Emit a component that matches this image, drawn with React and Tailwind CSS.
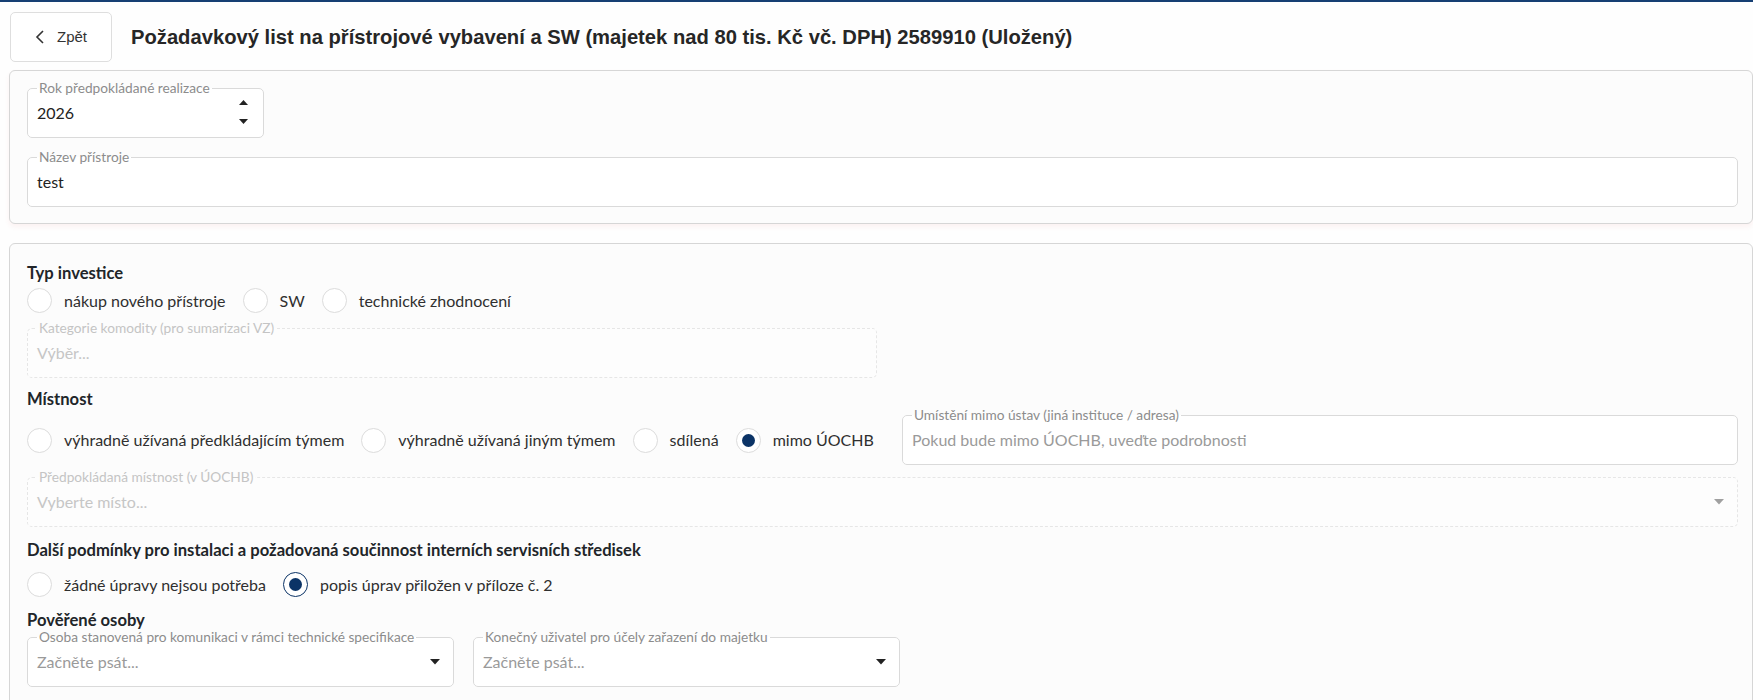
import React from "react";

const body = { fontFamily: "Lato, 'Noto Sans', sans-serif" };

function Caret({ color = "#222" }) {
  return (
    <svg width="10" height="6" viewBox="0 0 10 6" className="shrink-0">
      <path d="M0 0 L10 0 L5 5.5 Z" fill={color} />
    </svg>
  );
}

function Field({ label, children, className = "", dashed = false, right = null }) {
  return (
    <fieldset
      className={
        "rounded-[5px] px-[9px] pb-[13px] min-w-0 " +
        (dashed ? "border border-dashed border-[#e6e6e6] bg-[#fdfdfd] " : "border border-[#dadada] bg-white ") +
        className
      }
    >
      <legend
        className={
          "px-[2px] text-[13.7px] leading-[16px] " + (dashed ? "text-[#c4c4c4]" : "text-[#8c8c8c]")
        }
      >
        {label}
      </legend>
      <div className="flex items-center h-[22px] mt-[6px]">
        <div className="flex-1 min-w-0 text-[16px] leading-[22px]">{children}</div>
        {right}
      </div>
    </fieldset>
  );
}

function Radio({ checked = false, focused = false, label }) {
  return (
    <div className="flex items-center gap-[12px]">
      <span
        className={
          "w-[25px] h-[25px] rounded-full bg-white flex items-center justify-center shrink-0 border " +
          (focused ? "border-[#0b3366]" : "border-[#dcdcdc]")
        }
      >
        {checked && <span className="w-[13px] h-[13px] rounded-full bg-[#0b3366]" />}
      </span>
      <span className="text-[16px] leading-[22px] text-[#2f2f2f] whitespace-nowrap">{label}</span>
    </div>
  );
}

function Heading({ children, className = "" }) {
  return (
    <div className={"text-[16.6px] leading-[20px] font-bold text-[#212529] " + className}>{children}</div>
  );
}

export default function App() {
  return (
    <div className="min-h-[700px] bg-[#fefefe] overflow-hidden" style={body}>
      <div className="h-[2px] bg-[#163f73]" />
      <div className="flex items-center pt-[10px] pl-[10px]">
        <button
          className="w-[102px] h-[50px] border border-[#dedede] rounded-[5px] bg-white flex items-center justify-center gap-[12px] text-[#333]"
          style={{ fontFamily: "'Liberation Sans', Arial, sans-serif" }}
        >
          <svg width="10" height="16" viewBox="0 0 10 16">
            <path d="M8 2 L2 8 L8 14" fill="none" stroke="#333" strokeWidth="1.6" />
          </svg>
          <span className="text-[15px]">Zpět</span>
        </button>
        <h1
          className="ml-[19px] text-[20.2px] font-bold text-[#262626]"
          style={{ fontFamily: "'Liberation Sans', Arial, sans-serif" }}
        >
          Požadavkový list na přístrojové vybavení a SW (majetek nad 80 tis. Kč vč. DPH) 2589910 (Uložený)
        </h1>
      </div>

      <div className="ml-[9px] mt-[8px] border border-[#d6d6d6] rounded-[6px] bg-[#fcfcfc] pl-[17px] pr-[14px] pt-[9px] pb-[16px] shadow-[0_3px_5px_rgba(220,80,80,0.07)]">
        <Field label="Rok předpokládané realizace" className="w-[237px]"
          right={
            <div className="flex flex-col items-center gap-[14px] mr-[6px] -mt-[2px]">
              <svg width="9" height="5" viewBox="0 0 9 5"><path d="M0 5 L9 5 L4.5 0 Z" fill="#222" /></svg>
              <svg width="9" height="5" viewBox="0 0 9 5"><path d="M0 0 L9 0 L4.5 5 Z" fill="#222" /></svg>
            </div>
          }
        >
          <span className="text-[#222]">2026</span>
        </Field>
        <Field label="Název přístroje" className="mt-[11px]">
          <span className="text-[#222]">test</span>
        </Field>
      </div>

      <div className="ml-[9px] mt-[19px] border border-[#d6d6d6] rounded-[6px] bg-[#fcfcfc] pl-[17px] pr-[14px] pt-[19px] pb-[20px]">
        <Heading>Typ investice</Heading>
        <div className="flex items-center gap-[17px] mt-[5px]">
          <Radio label="nákup nového přístroje" />
          <Radio label="SW" />
          <Radio label="technické zhodnocení" />
        </div>
        <Field label="Kategorie komodity (pro sumarizaci VZ)" dashed className="w-[850px] mt-[7px]">
          <span className="text-[#c6c6c6]">Výběr...</span>
        </Field>

        <Heading className="mt-[11px]">Místnost</Heading>
        <div className="flex items-center -mt-[2px]">
          <div className="w-[875px] flex items-center gap-[17px] pt-[8px]">
            <Radio label="výhradně užívaná předkládajícím týmem" />
            <Radio label="výhradně užívaná jiným týmem" />
            <Radio label="sdílená" />
            <Radio label="mimo ÚOCHB" checked />
          </div>
          <Field label="Umístění mimo ústav (jiná instituce / adresa)" className="flex-1">
            <span className="text-[#9a9a9a]">Pokud bude mimo ÚOCHB, uveďte podrobnosti</span>
          </Field>
        </div>
        <Field label="Předpokládaná místnost (v ÚOCHB)" dashed className="mt-[4px]" right={<span className="mr-[4px]"><Caret color="#a0a0a0" /></span>}>
          <span className="text-[#c6c6c6]">Vyberte místo...</span>
        </Field>

        <Heading className="mt-[13px]">Další podmínky pro instalaci a požadovaná součinnost interních servisních středisek</Heading>
        <div className="flex items-center gap-[17px] mt-[12px]">
          <Radio label="žádné úpravy nejsou potřeba" />
          <Radio label="popis úprav přiložen v příloze č. 2" checked focused />
        </div>

        <Heading className="mt-[13px]">Pověřené osoby</Heading>
        <div className="flex gap-[19px] -mt-[1px]">
          <Field label="Osoba stanovená pro komunikaci v rámci technické specifikace" className="w-[427px]" right={<span className="mr-[4px]"><Caret /></span>}>
            <span className="text-[#9a9a9a]">Začněte psát...</span>
          </Field>
          <Field label="Konečný uživatel pro účely zařazení do majetku" className="w-[427px]" right={<span className="mr-[4px]"><Caret /></span>}>
            <span className="text-[#9a9a9a]">Začněte psát...</span>
          </Field>
        </div>
      </div>
    </div>
  );
}
